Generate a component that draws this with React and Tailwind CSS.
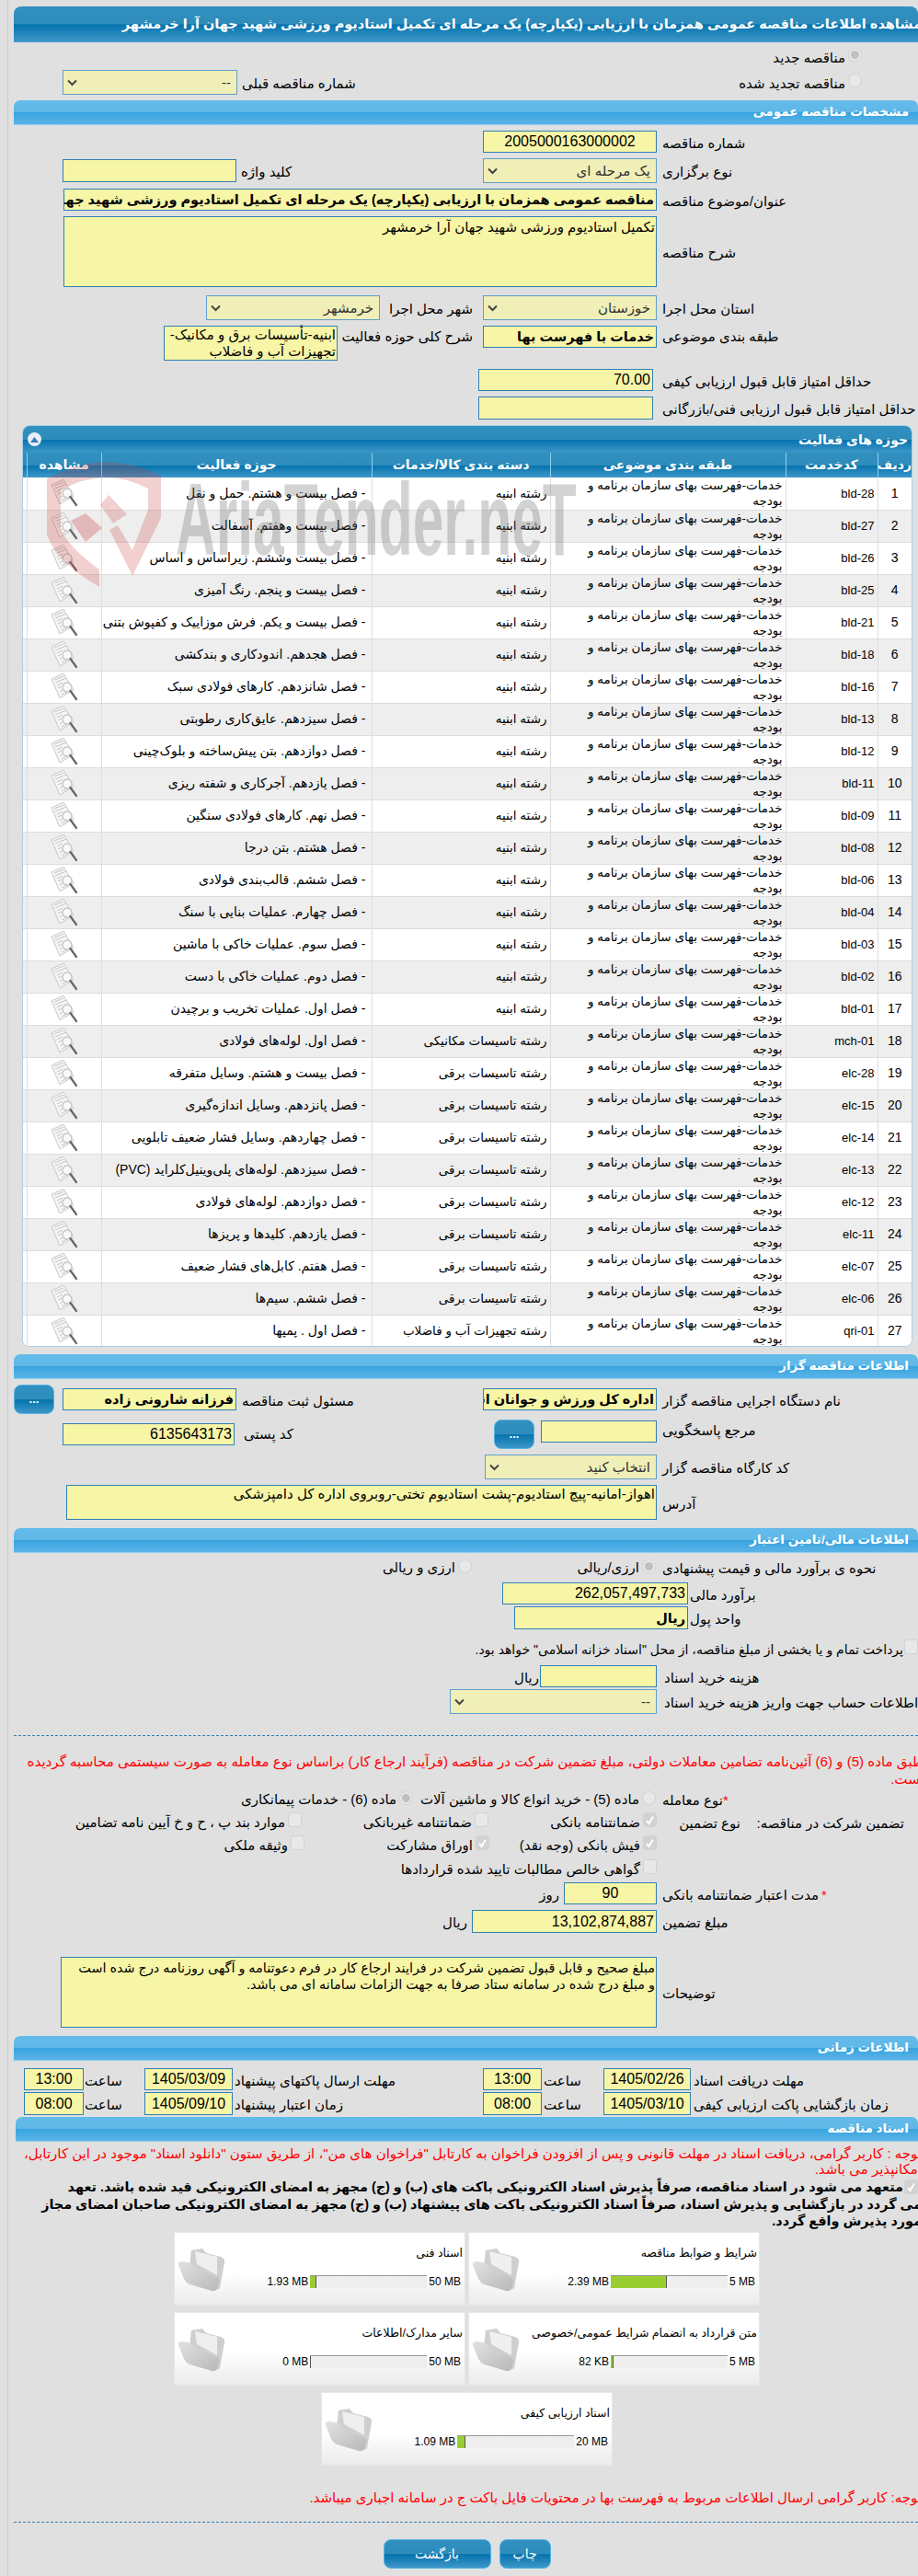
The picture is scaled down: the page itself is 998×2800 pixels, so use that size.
import React from "react";

const rows = [
  ["bld-28","رشته ابنیه","- فصل بیست و هشتم. حمل و نقل"],
  ["bld-27","رشته ابنیه","- فصل بیست وهفتم. آسفالت"],
  ["bld-26","رشته ابنیه","- فصل بیست وششم. زیراساس و اساس"],
  ["bld-25","رشته ابنیه","- فصل بیست و پنجم. رنگ آمیزی"],
  ["bld-21","رشته ابنیه","- فصل بیست و یکم. فرش موزاییک و کفپوش بتنی"],
  ["bld-18","رشته ابنیه","- فصل هجدهم. اندودکاری و بندکشی"],
  ["bld-16","رشته ابنیه","- فصل شانزدهم. کارهای فولادی سبک"],
  ["bld-13","رشته ابنیه","- فصل سیزدهم. عایق‌کاری رطوبتی"],
  ["bld-12","رشته ابنیه","- فصل دوازدهم. بتن پیش‌ساخته و بلوک‌چینی"],
  ["bld-11","رشته ابنیه","- فصل یازدهم. آجرکاری و شفته ریزی"],
  ["bld-09","رشته ابنیه","- فصل نهم. کارهای فولادی سنگین"],
  ["bld-08","رشته ابنیه","- فصل هشتم. بتن درجا"],
  ["bld-06","رشته ابنیه","- فصل ششم. قالب‌بندی فولادی"],
  ["bld-04","رشته ابنیه","- فصل چهارم. عملیات بنایی با سنگ"],
  ["bld-03","رشته ابنیه","- فصل سوم. عملیات خاکی با ماشین"],
  ["bld-02","رشته ابنیه","- فصل دوم. عملیات خاکی با دست"],
  ["bld-01","رشته ابنیه","- فصل اول. عملیات تخریب و برچیدن"],
  ["mch-01","رشته تاسیسات مکانیکی","- فصل اول. لوله‌های فولادی"],
  ["elc-28","رشته تاسیسات برقی","- فصل بیست و هشتم. وسایل متفرقه"],
  ["elc-15","رشته تاسیسات برقی","- فصل پانزدهم. وسایل اندازه‌گیری"],
  ["elc-14","رشته تاسیسات برقی","- فصل چهاردهم. وسایل فشار ضعیف تابلویی"],
  ["elc-13","رشته تاسیسات برقی","- فصل سیزدهم. لوله‌های پلی‌وینیل‌کلراید (PVC)"],
  ["elc-12","رشته تاسیسات برقی","- فصل دوازدهم. لوله‌های فولادی"],
  ["elc-11","رشته تاسیسات برقی","- فصل یازدهم. کلیدها و پریزها"],
  ["elc-07","رشته تاسیسات برقی","- فصل هفتم. کابل‌های فشار ضعیف"],
  ["elc-06","رشته تاسیسات برقی","- فصل ششم. سیم‌ها"],
  ["qri-01","رشته تجهیزات آب و فاضلاب","- فصل اول . پمپها"],
];

const Section = ({ children, className = "" }) => (
  <div className={"h-[27px] rounded-t-[7px] border-b border-[#8ccff0] bg-[linear-gradient(to_bottom,#63bbea_0%,#5fb8e8_48%,#38a3de_50%,#5ab4e7_100%)] flex items-center pr-[10px] text-[13.5px] font-bold text-white " + className}>
    {children}
  </div>
);

const Lab = ({ children, className = "w-[278px] ml-[6px]" }) => (
  <div className={"shrink-0 whitespace-nowrap text-left pt-[3px] " + className}>{children}</div>
);

const Inp = ({ children, className = "", bold = false }) => (
  <div className={"shrink-0 overflow-hidden whitespace-nowrap border border-[#2f80b4] bg-[#f7f5a6] text-black px-[2px] flex items-center " + (bold ? "font-bold text-[14.5px] " : "") + className}>
    <span className="block">{children}</span>
  </div>
);

const Num = ({ children, className = "" }) => (
  <div className={"shrink-0 overflow-hidden whitespace-nowrap border border-[#2f80b4] bg-[#f7f5a6] text-black px-[2px] flex items-center text-[16px] " + className}>
    {children}
  </div>
);

const Sel = ({ children, className = "" }) => (
  <div className={"shrink-0 flex items-center justify-between whitespace-nowrap border border-[#5f9fc8] bg-[#f0efb8] text-[#333] pr-[6px] pl-[4px] " + className}>
    <span>{children}</span>
    <svg width="11" height="8" viewBox="0 0 11 8" className="shrink-0"><path d="M1 1.5 L5.5 6 L10 1.5" fill="none" stroke="#444" strokeWidth="2" /></svg>
  </div>
);

const Area = ({ children, className = "" }) => (
  <div className={"shrink-0 border border-[#2f80b4] bg-[#f7f5a6] text-black leading-[18px] pt-[2px] pr-[1px] " + className}>{children}</div>
);

const Radio = ({ on = false, className = "" }) => (
  <span className={"shrink-0 w-[15px] h-[15px] rounded-full border border-[#d2d2d2] bg-[#e8e8e8] flex items-center justify-center " + className}>
    {on && <span className="w-[9px] h-[9px] rounded-full bg-[#c0c0c0]" />}
  </span>
);

const Check = ({ on = false, className = "" }) => (
  <span className={"shrink-0 w-[15px] h-[16px] rounded-[3px] border border-[#d2d2d2] flex items-center justify-center " + (on ? "bg-[#d2d2d2] " : "bg-[#e8e8e8] ") + className}>
    {on && (
      <svg width="11" height="11" viewBox="0 0 11 11"><path d="M2 6 L4.5 9 L9 1.5" fill="none" stroke="#fff" strokeWidth="2" /></svg>
    )}
  </span>
);

const Opt = ({ text, on, className = "", kind = "check" }) => (
  <div className={"flex items-start shrink-0 whitespace-nowrap " + className}>
    {kind === "check" ? <Check on={on} /> : <Radio on={on} className="mt-[2px]" />}
    <span className="mr-[3px] pt-[2px]">{text}</span>
  </div>
);

const Btn = ({ children, className = "" }) => (
  <div className={"shrink-0 flex items-center justify-center rounded-[8px] border border-[#56b4e2] text-white bg-[linear-gradient(to_bottom,#3090c0_0%,#2e8cbb_50%,#0573ad_52%,#3e97c9_100%)] " + className}>
    {children}
  </div>
);

const DocIcon = () => (
  <svg width="30" height="30" viewBox="0 0 30 30" className="mx-auto">
    <polygon points="1,6 14,0 25,18 10,27" fill="#f5f5f5" stroke="#c8c8c8" />
    <path d="M4 7 L14 3 M5 10 L17 5 M7 13 L13 10 M8 16 L12 14 M10 20 L13 18 M12 23 L18 20" stroke="#c4c4c4" strokeWidth="1" />
    <circle cx="18" cy="15" r="5" fill="#fbfbfb" fillOpacity="0.7" stroke="#c6c6c6" strokeWidth="1.4" />
    <path d="M21.5 19 L28 28" stroke="#666" strokeWidth="2.2" strokeLinecap="round" />
  </svg>
);

const Folder = () => (
  <svg width="54" height="48" viewBox="0 0 54 48" className="shrink-0">
    <defs>
      <linearGradient id="fg" x1="0" y1="0" x2="1" y2="1">
        <stop offset="0" stopColor="#e2e2e2" />
        <stop offset="1" stopColor="#b8b8b8" />
      </linearGradient>
    </defs>
    <path d="M16 3 L28 1 L32 6 L48 10 Q53 12 52 16 L47 44 Q45 47 41 44 L14 22 Z" fill="#cfcfcf" />
    <path d="M20 4 L44 10 L44 30 L22 18 Z" fill="#efefef" />
    <path d="M2 19 Q1 15 6 15 L13 16 Q16 17 19 20 L24 25 L45 33 Q47 35 46 37 L44 45 Q42 48 38 47 L14 40 Q10 38 8 34 Z" fill="url(#fg)" />
  </svg>
);

const FileCard = ({ title, limit, used, px, className = "" }) => (
  <div className={"w-[317px] h-[80px] shrink-0 flex justify-between bg-[linear-gradient(to_bottom,#ffffff_0%,#ffffff_55%,#ebebeb_100%)] border border-[#e6e6e6] pr-[2px] pl-[2px] " + className}>
    <div className="flex-1 flex flex-col">
      <div className="h-[46px] pt-[13px] text-[12.5px] whitespace-nowrap">{title}</div>
      <div className="flex items-center h-[14px] text-[12px] whitespace-nowrap leading-[14px]">
        <span dir="ltr" className="pr-[2px] ml-[2px]">{limit}</span>
        <div dir="ltr" className="w-[127px] h-[14px] shrink-0 bg-[#eeeeee] border-t border-[#999999] flex">
          <div className="h-full bg-[#9acd32] border-r border-[#555555]" style={{ width: px + "px" }} />
        </div>
        <span dir="ltr" className="mr-[2px]">{used}</span>
      </div>
    </div>
    <div className="pt-[16px]"><Folder /></div>
  </div>
);

const Mark = () => (
  <>
    <svg width="130" height="150" viewBox="50 495 130 150" className="absolute left-[26px] top-[33px] pointer-events-none">
      <path
        d="M50 519 Q112 485 174 516 L174 562 L143 625 L118 575 L127 570 L143 597 L160 553 L160 530 Q112 505 65 532 L65 575 Q75 595 107 618 L107 637 Q60 610 50 580 Z"
        fill="#c83c3c"
        fillOpacity="0.24"
      />
      <polygon points="117,537 137,558 122,568 108,548" fill="#c83c3c" fillOpacity="0.24" />
      <polygon points="92,557 110,573 92,588 76,565" fill="#c83c3c" fillOpacity="0.3" />
    </svg>
    <div dir="ltr" className="absolute left-[166px] top-[40px] origin-top-left scale-x-[0.54] whitespace-nowrap font-bold text-[112px] leading-[124px] text-[#6e6e6e]/30 pointer-events-none">
      AriaTender.neT
    </div>
  </>
);

export default function App() {
  return (
    <div dir="rtl" className="w-[998px] h-[2800px] overflow-hidden bg-[#e0e0e0] pl-[8px] text-[15px] leading-[18px] text-black font-['Liberation_Sans','DejaVu_Sans',sans-serif]">
      <div className="h-full border-l border-[#cdcdcd] pl-[6px]">
        {/* title */}
        <div className="pt-[7px]">
          <div className="h-[39px] rounded-t-[8px] border-b border-[#4a9bd0] bg-[linear-gradient(to_bottom,#3090c0_0%,#2e8cbb_50%,#0573ad_52%,#3e97c9_100%)] flex items-center text-white font-bold text-[14.5px] whitespace-nowrap overflow-hidden">
            <span className="-mr-[4px]">مشاهده اطلاعات مناقصه عمومی همزمان با ارزیابی (یکپارچه) یک مرحله ای تکمیل استادیوم ورزشی شهید جهان آرا خرمشهر</span>
          </div>
        </div>

        <div className="mt-[6px] h-[22px] flex items-start pr-[61px]">
          <Radio on />
          <span className="mr-[3px] pt-[2px]">مناقصه جدید</span>
        </div>
        <div className="mt-[2px] h-[27px] flex items-start justify-between pr-[61px] pl-[53px]">
          <div className="flex items-start">
            <Radio className="mt-[4px]" />
            <span className="mr-[3px] pt-[6px]">مناقصه تجدید شده</span>
          </div>
          <div className="flex items-center">
            <span className="ml-[5px] pt-[3px]">شماره مناقصه قبلی</span>
            <Sel className="w-[190px] h-[27px]">--</Sel>
          </div>
        </div>

        <Section className="mt-[6px]">مشخصات مناقصه عمومی</Section>

        <div className="mt-[6px] h-[24px] flex items-center">
          <Lab>شماره مناقصه</Lab>
          <Num className="w-[189px] h-[24px] justify-center">2005000163000002</Num>
        </div>
        <div className="mt-[6px] h-[27px] flex items-center">
          <Lab>نوع برگزاری</Lab>
          <Sel className="w-[189px] h-[27px]">یک مرحله ای</Sel>
          <Lab className="w-[263px] ml-[5px]">کلید واژه</Lab>
          <Inp className="w-[189px] h-[25px]" />
        </div>
        <div className="mt-[6px] h-[24px] flex items-center">
          <Lab>عنوان/موضوع مناقصه</Lab>
          <Inp bold className="w-[645px] h-[24px]">مناقصه عمومی همزمان با ارزیابی (یکپارچه) یک مرحله ای تکمیل استادیوم ورزشی شهید جهان آرا خرمشهر</Inp>
        </div>
        <div className="mt-[6px] h-[77px] flex items-center">
          <Lab>شرح مناقصه</Lab>
          <Area className="w-[645px] h-[77px]">تکمیل استادیوم ورزشی شهید جهان آرا خرمشهر</Area>
        </div>
        <div className="mt-[9px] h-[27px] flex items-center">
          <Lab>استان محل اجرا</Lab>
          <Sel className="w-[189px] h-[27px]">خوزستان</Sel>
          <div className="w-[96px] mr-[11px] ml-[5px] pt-[3px] whitespace-nowrap shrink-0">شهر محل اجرا</div>
          <Sel className="w-[189px] h-[27px]">خرمشهر</Sel>
        </div>
        <div className="mt-[6px] h-[38px] flex items-start">
          <Lab className="w-[278px] ml-[6px]">طبقه بندی موضوعی</Lab>
          <Inp bold className="w-[189px] h-[24px]">خدمات با فهرست بها</Inp>
          <div className="w-[142px] mr-[11px] ml-[5px] pt-[3px] whitespace-nowrap shrink-0">شرح کلی حوزه فعالیت</div>
          <Area className="w-[189px] h-[38px] !pt-0">ابنیه-تأسیسات برق و مکانیک-<br />تجهیزات آب و فاضلاب</Area>
        </div>
        <div className="mt-[9px] h-[24px] flex items-center">
          <Lab className="w-[278px] ml-[10px]">حداقل امتیاز قابل قبول ارزیابی کیفی</Lab>
          <Num className="w-[190px] h-[24px]">70.00</Num>
        </div>
        <div className="mt-[6px] h-[25px] flex items-center">
          <Lab className="w-[278px] ml-[10px]">حداقل امتیاز قابل قبول ارزیابی فنی/بازرگانی</Lab>
          <Inp className="w-[190px] h-[25px]" />
        </div>

        {/* table */}
        <div className="relative mt-[6px] ml-[9px] mr-[6px] h-[1002px] rounded-[8px] overflow-hidden border border-[#a9cfe6] bg-white">
          <div className="h-[29px] flex items-center justify-between pr-[4px] pl-[5px] text-white font-bold text-[14px] bg-[linear-gradient(to_bottom,#3090c0_0%,#2e8cbb_50%,#0573ad_52%,#3e97c9_100%)]">
            <span>حوزه های فعالیت</span>
            <span className="w-[15px] h-[15px] rounded-full bg-[#e8eef7] flex items-center justify-center">
              <svg width="9" height="6" viewBox="0 0 9 6"><polygon points="4.5,0 9,6 0,6" fill="#2f80b4" /></svg>
            </span>
          </div>
          <table className="w-full table-fixed border-collapse text-[13.5px] leading-[17px]">
            <colgroup>
              <col className="w-[37px]" />
              <col className="w-[100px]" />
              <col className="w-[256px]" />
              <col className="w-[194px]" />
              <col className="w-[294px]" />
              <col className="w-[81px]" />
              <col className="w-[4px]" />
            </colgroup>
            <thead>
              <tr className="h-[27px] text-white font-bold text-[14px] bg-[linear-gradient(to_bottom,#3090c0_0%,#2e8cbb_50%,#0573ad_52%,#3e97c9_100%)]">
                <th className="p-0 font-bold border-l border-[#8fd0f0]">ردیف</th>
                <th className="p-0 font-bold border-l border-[#8fd0f0]">کدخدمت</th>
                <th className="p-0 font-bold border-l border-[#8fd0f0]">طبقه بندی موضوعی</th>
                <th className="p-0 font-bold border-l border-[#8fd0f0]">دسته بندی کالا/خدمات</th>
                <th className="p-0 font-bold border-l border-[#8fd0f0]">حوزه فعالیت</th>
                <th className="p-0 font-bold border-l border-[#8fd0f0]">مشاهده</th>
                <th className="p-0" />
              </tr>
            </thead>
            <tbody>
              {rows.map((r, i) => (
                <tr key={r[0]} className={"h-[35px] " + (i % 2 ? "bg-[#eeeeee]" : "bg-white")}>
                  <td className="p-0 text-center text-[14px] border-b border-l border-[#dddddd]">{i + 1}</td>
                  <td className="p-0 pr-[3px] text-[13px] border-b border-l border-[#dddddd]">{r[0]}</td>
                  <td className="p-0 pr-[3px] border-b border-l border-[#dddddd] whitespace-nowrap">خدمات-فهرست بهای سازمان برنامه و<br />بودجه</td>
                  <td className="p-0 pr-[3px] border-b border-l border-[#dddddd] whitespace-nowrap">{r[1]}</td>
                  <td className="p-0 pr-[6px] text-[14px] border-b border-l border-[#dddddd] whitespace-nowrap">{r[2]}</td>
                  <td className="p-0 border-b border-l border-[#dddddd]"><DocIcon /></td>
                  <td className="p-0 border-b border-[#dddddd]" />
                </tr>
              ))}
            </tbody>
          </table>
          <Mark />
        </div>

        <Section className="mt-[8px]">اطلاعات مناقصه گزار</Section>

        <div className="mt-[6px] h-[32px] flex items-center">
          <Lab>نام دستگاه اجرایی مناقصه گزار</Lab>
          <Inp bold className="w-[189px] h-[24px]">اداره کل ورزش و جوانان استان خوزستان</Inp>
          <Lab className="w-[262px] ml-[6px]">مسئول ثبت مناقصه</Lab>
          <Inp bold className="w-[189px] h-[24px]">فرزانه شارونی زاده</Inp>
          <Btn className="w-[44px] h-[32px] mr-[9px] text-[13px] font-bold">...</Btn>
        </div>
        <div className="mt-[6px] h-[32px] flex items-start">
          <Lab>مرجع پاسخگویی</Lab>
          <Inp className="w-[126px] h-[24px] mt-[1px]" />
          <Btn className="w-[44px] h-[32px] mr-[7px] text-[13px] font-bold">...</Btn>
          <Lab className="w-[272px] ml-[10px] !pt-[7px]">کد پستی</Lab>
          <Num className="w-[187px] h-[24px] mt-[4px]">6135643173</Num>
        </div>
        <div className="mt-[6px] h-[27px] flex items-center">
          <Lab>کد کارگاه مناقصه گزار</Lab>
          <Sel className="w-[187px] h-[27px]">انتخاب کنید</Sel>
        </div>
        <div className="mt-[6px] h-[38px] flex items-center">
          <Lab>آدرس</Lab>
          <Area className="w-[642px] h-[38px] !pt-0">اهواز-امانیه-پیچ استادیوم-پشت استادیوم تختی-روبروی اداره کل دامپزشکی</Area>
        </div>

        <Section className="mt-[9px]">اطلاعات مالی/تامین اعتبار</Section>

        <div className="mt-[5px] h-[24px] flex items-start">
          <Lab className="w-[278px] ml-[7px]">نحوه ی برآورد مالی و قیمت پیشنهادی</Lab>
          <Opt kind="radio" on text="ارزی/ریالی" className="w-[200px]" />
          <Opt kind="radio" text="ارزی و ریالی" />
        </div>
        <div className="mt-[3px] h-[24px] flex items-center">
          <Lab className="w-[248px] ml-[2px]">برآورد مالی</Lab>
          <Num className="w-[202px] h-[24px]">262,057,497,733</Num>
        </div>
        <div className="mt-[2px] h-[25px] flex items-center">
          <Lab className="w-[248px] ml-[2px]">واحد پول</Lab>
          <Inp bold className="w-[189px] h-[25px]">ریال</Inp>
        </div>
        <div className="mt-[11px] h-[22px] flex items-start whitespace-nowrap">
          <Check />
          <span className="mr-[1px] pt-[2px] text-[14px]">پرداخت تمام و یا بخشی از مبلغ مناقصه، از محل &quot;اسناد خزانه اسلامی&quot; خواهد بود.</span>
        </div>
        <div className="mt-[6px] h-[24px] flex items-center">
          <Lab className="w-[276px] ml-[8px]">هزینه خرید اسناد</Lab>
          <Inp className="w-[127px] h-[24px]" />
          <span className="mr-[1px] pt-[3px]">ریال</span>
        </div>
        <div className="mt-[2px] h-[27px] flex items-center">
          <Lab className="w-[340px] -mr-[64px] ml-[8px]">اطلاعات حساب جهت واریز هزینه خرید اسناد</Lab>
          <Sel className="w-[225px] h-[27px]">--</Sel>
        </div>

        <div className="mt-[23px] border-b border-dashed border-[#2f80b4]" />

        <div className="mt-[18px] -mr-[6px] text-[#ff0000] text-[15.1px] leading-[19px] whitespace-nowrap">
          طبق ماده (5) و (6) آئین‌نامه تضامین معاملات دولتی، مبلغ تضمین شرکت در مناقصه (فرآیند ارجاع کار) براساس نوع معامله به صورت سیستمی محاسبه گردیده<br />است.
        </div>

        <div className="mt-[2px] h-[24px] flex items-start">
          <Lab className="w-[278px] ml-[7px]"><span className="text-[#ff0000]">*</span>نوع معامله</Lab>
          <Opt kind="radio" text="ماده (5) - خرید انواع کالا و ماشین آلات" className="w-[264px]" />
          <Opt kind="radio" on text="ماده (6) - خدمات پیمانکاری" />
        </div>
        <div className="mt-[1px] h-[25px] flex items-start pr-[15px] whitespace-nowrap">
          <span className="w-[178px] pt-[3px] shrink-0">تضمین شرکت در مناقصه:</span>
          <span className="w-[91px] pt-[3px] shrink-0">نوع تضمین</span>
          <Opt on text="ضمانتنامه بانکی" className="w-[183px]" />
          <Opt text="ضمانتنامه غیربانکی" className="w-[203px]" />
          <Opt text="موارد بند پ ، ح و خ آیین نامه تضامین" />
        </div>
        <div className="h-[26px] flex items-start pr-[284px]">
          <Opt on text="فیش بانکی (وجه نقد)" className="w-[182px]" />
          <Opt on text="اوراق مشارکت" className="w-[201px]" />
          <Opt text="وثیقه ملکی" />
        </div>
        <div className="h-[25px] flex items-start pr-[284px]">
          <Opt text="گواهی خالص مطالبات تایید شده قراردادها" />
        </div>
        <div className="h-[24px] flex items-center">
          <Lab><span className="text-[#ff0000] ml-[3px]">*</span>مدت اعتبار ضمانتنامه بانکی</Lab>
          <Num className="w-[101px] h-[24px] justify-center">90</Num>
          <span className="mr-[5px] pt-[3px]">روز</span>
        </div>
        <div className="mt-[6px] h-[25px] flex items-center">
          <Lab>مبلغ تضمین</Lab>
          <Num className="w-[201px] h-[25px]">13,102,874,887</Num>
          <span className="mr-[5px] pt-[3px]">ریال</span>
        </div>
        <div className="mt-[26px] h-[77px] flex items-center">
          <Lab>توضیحات</Lab>
          <Area className="w-[648px] h-[77px] text-[14.4px] whitespace-nowrap">مبلغ صحیح و قابل قبول تضمین شرکت در فرایند ارجاع کار در فرم دعوتنامه و آگهی روزنامه درج شده است<br />و مبلغ درج شده در سامانه ستاد صرفا به جهت الزامات سامانه ای می باشد.</Area>
        </div>

        <Section className="mt-[9px]">اطلاعات زمانی</Section>

        <div className="mt-[8px] h-[24px] flex items-center">
          <Lab className="w-[244px] ml-[3px]">مهلت دریافت اسناد</Lab>
          <Num className="w-[95px] h-[24px] justify-center">1405/02/26</Num>
          <Lab className="w-[65px] ml-[2px]">ساعت</Lab>
          <Num className="w-[64px] h-[24px] justify-center">13:00</Num>
          <Lab className="w-[270px] ml-[2px]">مهلت ارسال پاکتهای پیشنهاد</Lab>
          <Num className="w-[96px] h-[24px] justify-center">1405/03/09</Num>
          <Lab className="w-[65px] ml-[1px]">ساعت</Lab>
          <Num className="w-[65px] h-[24px] justify-center">13:00</Num>
        </div>
        <div className="mt-[2px] h-[25px] flex items-center">
          <Lab className="w-[244px] ml-[3px]">زمان بازگشایی پاکت ارزیابی کیفی</Lab>
          <Num className="w-[95px] h-[25px] justify-center">1405/03/10</Num>
          <Lab className="w-[65px] ml-[2px]">ساعت</Lab>
          <Num className="w-[64px] h-[25px] justify-center">08:00</Num>
          <Lab className="w-[270px] ml-[2px]">زمان اعتبار پیشنهاد</Lab>
          <Num className="w-[96px] h-[25px] justify-center">1405/09/10</Num>
          <Lab className="w-[65px] ml-[1px]">ساعت</Lab>
          <Num className="w-[65px] h-[25px] justify-center">08:00</Num>
        </div>

        <div className="ml-[2px]">
          <Section className="mt-[2px]">اسناد مناقصه</Section>

          <div className="mt-[4px] -mr-[4px] text-[#ff0000] leading-[17px] whitespace-nowrap">
            توجه : کاربر گرامی، دریافت اسناد در مهلت قانونی و پس از افزودن فراخوان به کارتابل &quot;فراخوان های من&quot;، از طریق ستون &quot;دانلود اسناد&quot; موجود در این کارتابل،<br />امکانپذیر می باشد.
          </div>

          <div className="relative mt-[2px] pr-[20px] -mr-[4px] font-bold text-[14.4px] leading-[18.5px] whitespace-nowrap">
            <Check on className="absolute right-[4px] top-[1px]" />
            متعهد می شود در اسناد مناقصه، صرفاً پذیرش اسناد الکترونیکی باکت های (ب) و (ج) مجهز به امضای الکترونیکی قید شده باشد. تعهد
            <div className="-mr-[20px]">می گردد در بازگشایی و پذیرش اسناد، صرفاً اسناد الکترونیکی باکت های پیشنهاد (ب) و (ج) مجهز به امضای الکترونیکی صاحبان امضای مجاز</div>
            <div className="-mr-[20px]">مورد پذیرش واقع گردد.</div>
          </div>

          <div className="mt-[2px] flex flex-col items-center gap-[7px]">
            <div className="flex gap-[3px]">
              <FileCard title="شرایط و ضوابط مناقصه" limit="5 MB" used="2.39 MB" px={61} />
              <FileCard title="اسناد فنی" limit="50 MB" used="1.93 MB" px={7} />
            </div>
            <div className="flex gap-[3px]">
              <FileCard title="متن قرارداد به انضمام شرایط عمومی/خصوصی" limit="5 MB" used="82 KB" px={3} />
              <FileCard title="سایر مدارک/اطلاعات" limit="50 MB" used="0 MB" px={1} />
            </div>
            <FileCard title="اسناد ارزیابی کیفی" limit="20 MB" used="1.09 MB" px={9} />
          </div>

          <div className="mt-[25px] -mr-[4px] text-[#ff0000] leading-[19px] whitespace-nowrap">
            توجه: کاربر گرامی ارسال اطلاعات مربوط به فهرست بها در محتویات فایل باکت ج در سامانه اجباری میباشد.
          </div>
        </div>

        <div className="mt-[17px] border-b border-dashed border-[#2f80b4]" />

        <div className="mt-[18px] ml-[2px] flex justify-center gap-[9px]">
          <Btn className="w-[56px] h-[32px] text-[14px]">چاپ</Btn>
          <Btn className="w-[117px] h-[32px] text-[14px]">بازگشت</Btn>
        </div>
      </div>
    </div>
  );
}
